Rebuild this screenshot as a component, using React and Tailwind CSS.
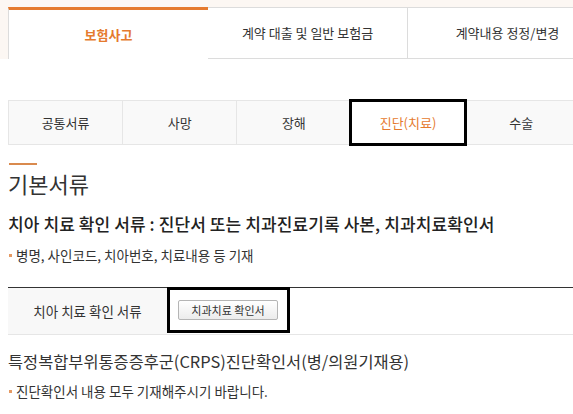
import React from "react";

const topTabs = ["보험사고", "계약 대출 및 일반 보험금", "계약내용 정정/변경", "기타 서비스"];
const subTabs = ["공통서류", "사망", "장해", "진단(치료)", "수술", "입원", "통원"];

const Bullet = ({ children }) => (
  <p className="flex items-center text-[13.5px] text-[#333] leading-[20px]">
    <span className="w-[3px] h-[3px] bg-[#e59a63] mr-[4px] ml-[1px]" />
    {children}
  </p>
);

const App = () => {
  const active = 0;
  const activeSub = 3;

  return (
    <div
      className="w-[573px] h-[414px] overflow-hidden bg-white"
      style={{ fontFamily: '"Noto Sans CJK KR", "Noto Sans", sans-serif' }}
    >
      {/* ===== TOP TABS ===== */}
      <div className="bg-[#fcf7f3] pt-[7px] pl-[8px]">
        <div className="flex w-[800px]">
          {topTabs.map((t, i) => (
            <div
              key={i}
              className={
                i === active
                  ? "w-[200px] h-[52px] flex items-center justify-center bg-white border-t-[3px] border-t-[#e57a2e] border-l border-l-[#dcdcdc] text-[13px] font-bold text-[#e57a2e]"
                  : "w-[200px] h-[52px] flex items-center justify-center bg-white border border-[#dcdcdc] border-l-0 text-[13px] text-[#333]"
              }
            >
              {t}
            </div>
          ))}
        </div>
      </div>

      <div className="pl-[8px]">
        {/* ===== SUB TABS ===== */}
        <div className="mt-[41px] flex w-[800px] border border-[#e6e6e6] bg-[#f9f9f9]">
          {subTabs.map((t, i) => (
            <div
              key={i}
              className={
                i === activeSub
                  ? "relative z-10 flex-1 h-[43px] flex items-center justify-center bg-white text-[13px] text-[#e57a2e] outline-[3px] outline-black -outline-offset-1"
                  : "flex-1 h-[43px] flex items-center justify-center border-r border-[#e6e6e6] text-[13px] text-[#333]"
              }
            >
              {t}
            </div>
          ))}
        </div>

        {/* ===== 기본서류 ===== */}
        <div className="mt-[18px] ml-[1px] w-[28px] h-[2px] bg-[#d98a4e]" />
        <h2 className="mt-[4px] text-[22px] leading-[28px] text-[#333]">기본서류</h2>

        <h3 className="mt-[16px] text-[17px] leading-[22px] tracking-[0.1px] font-medium text-[#222]">
          치아 치료 확인 서류 : 진단서 또는 치과진료기록 사본, 치과치료확인서
        </h3>
        <div className="mt-[10px]">
          <Bullet>병명, 사인코드, 치아번호, 치료내용 등 기재</Bullet>
        </div>

        <div className="mt-[22px] w-[800px] flex border-t border-t-[#333] border-b border-b-[#e6e6e6]">
          <div className="w-[159px] h-[46px] flex items-center justify-center bg-[#f8f8f8] text-[13.5px] text-[#333]">
            치아 치료 확인 서류
          </div>
          <div className="w-[123px] h-[46px] -mt-px flex items-start pt-[10px] pl-[8px] border-[3px] border-black">
            <button className="w-[100px] h-[20px] border border-[#b5b5b5] rounded-[2px] bg-gradient-to-b from-white to-[#ececec] text-[11px] leading-[18px] text-[#333]">
              치과치료 확인서
            </button>
          </div>
        </div>

        <h3 className="mt-[14px] text-[16.4px] leading-[24px] text-[#333]">
          특정복합부위통증증후군(CRPS)진단확인서(병/의원기재용)
        </h3>
        <div className="mt-[8px]">
          <Bullet>진단확인서 내용 모두 기재해주시기 바랍니다.</Bullet>
        </div>
      </div>
    </div>
  );
};

export default App;
